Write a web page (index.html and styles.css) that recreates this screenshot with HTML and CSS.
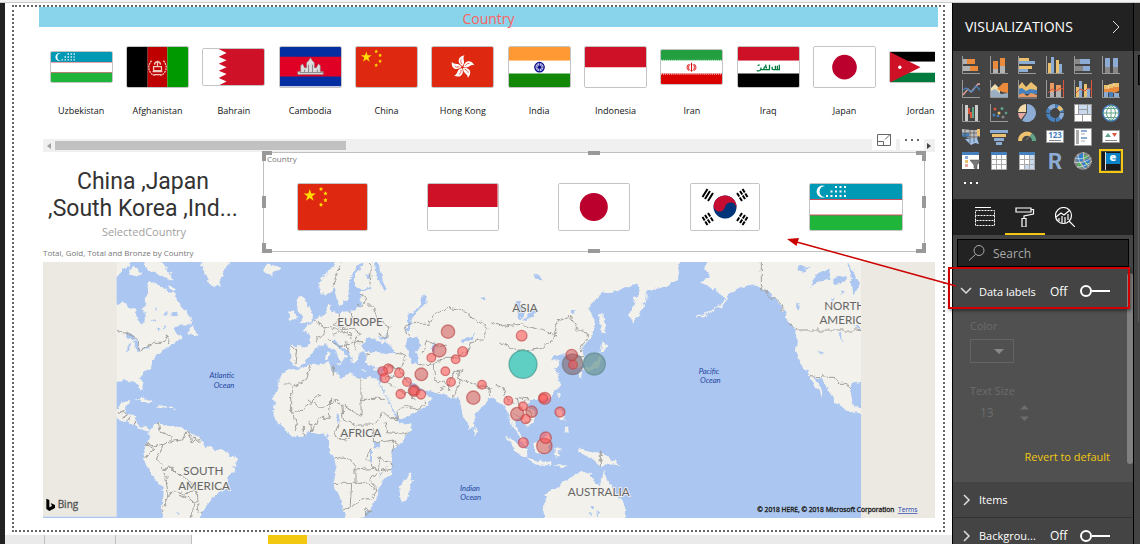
FILE: index.html
```html
<!DOCTYPE html>
<html lang="en">
<head>
<meta charset="utf-8">
<title>Report editor</title>
<link rel="stylesheet" href="styles.css">
</head>
<body>
<div class="topline"></div>
<div class="app">
  <main class="workspace">
    <div class="page">
      <h1 class="banner">Country</h1>
      <section class="strip">
        <ul class="flags">
          <li><span class="slot"><svg class="flag" viewBox="0 0 92 46"><g id="uz"><path fill="#0099b5" d="M0 0h92v15H0z"/><path fill="#fff" d="M0 15h92v16H0z"/><path fill="#1eb53a" d="M0 31h92v15H0z"/><path stroke="#c8515f" d="M0 15.500h92M0 31h92"/><path fill="#fff" d="M15 2a6 6 0 1 0 0 11a5 5 0 1 1 0-11z"/><path stroke="#fff" stroke-width="2" stroke-dasharray="2 2.500" d="M25 3h11M20.500 7.500h15M16 12h20"/></g></svg></span>Uzbekistan</li>
          <li><span class="slot"><svg class="flag" viewBox="0 0 62 41"><path d="M0 0h21v41H0z"/><path fill="#be0000" d="M21 0h20v41H21z"/><path fill="#090" d="M41 0h21v41H41z"/><g fill="none" stroke="#f4c9c0" stroke-width="1.300"><path d="M25 14c-5 5-3 13 3 15M37 14c5 5 3 13-3 15" stroke-dasharray="2 .8"/><path d="M26 25h10M27 20h8v4h-8zM31 14v6M28 18c0-4 6-4 6 0M27 28h8"/></g></svg></span>Afghanistan</li>
          <li><span class="slot"><svg class="flag" viewBox="0 0 62 37"><path fill="#fff" d="M0 0h62v37H0z"/><path fill="#ce1126" d="M62 0H16l8 4-8 4 8 3.500-8 3.500 8 3.500-8 3.500 8 3.500-8 4 8 3.500-8 4h46z"/></svg></span>Bahrain</li>
          <li><span class="slot"><svg class="flag" viewBox="0 0 62 40"><path fill="#032ea1" d="M0 0h62v40H0z"/><path fill="#e00025" d="M0 10h62v20H0z"/><path fill="#ddd" stroke="#777" stroke-width=".5" d="M18 28v-3h3v-6l2-2 2 4h2v-5l2-2 2-3 2 3 2 2v5h2l2-4 2 2v6h3v3z"/><path stroke="#888" d="M20 26h24M25 23v3M29 18v8M33 18v8M38 23v3"/></svg></span>Cambodia</li>
          <li><span class="slot"><svg class="flag" viewBox="0 0 62 41"><g id="cn"><path fill="#de2910" d="M0 0h62v41H0z"/><path fill="#ffde00" d="M10.500 4.500l1.300 4h4.200l-3.400 2.500 1.300 4-3.400-2.500-3.400 2.500 1.300-4L5 8.500h4.200z"/><path fill="#ffde00" d="M20.500 2.500l.6 1.200 1.300.2-1 .9.300 1.300-1.200-.6-1.200.6.300-1.300-1-.9 1.300-.2zM24.500 6.500l.6 1.200 1.300.2-1 .9.300 1.300-1.200-.6-1.200.6.300-1.300-1-.9 1.300-.2zM24.500 12.500l.6 1.200 1.300.2-1 .9.300 1.300-1.200-.6-1.200.6.300-1.300-1-.9 1.300-.2zM20.500 16.500l.6 1.200 1.300.2-1 .9.300 1.300-1.200-.6-1.200.6.300-1.300-1-.9 1.300-.2z"/></g></svg></span>China</li>
          <li><span class="slot"><svg class="flag" viewBox="0 0 62 41"><path fill="#de2910" d="M0 0h62v41H0z"/><g transform="translate(31 20.500)"><g id="petal"><path fill="#fff" d="M0-1C-6-4-5-11 2-12-1-8 4-6 0-1z"/><path stroke="#de2910" stroke-width=".7" fill="none" d="M-.5-3c-1-2-2-3-.8-5"/></g><use href="#petal" transform="rotate(72)"/><use href="#petal" transform="rotate(144)"/><use href="#petal" transform="rotate(216)"/><use href="#petal" transform="rotate(288)"/></g></svg></span>Hong Kong</li>
          <li><span class="slot"><svg class="flag" viewBox="0 0 62 41"><path fill="#f93" d="M0 0h62v14H0z"/><path fill="#fff" d="M0 14h62v13H0z"/><path fill="#138808" d="M0 27h62v14H0z"/><circle cx="31" cy="20.500" r="4.800" fill="#bbe" stroke="#008" stroke-width="1.200"/><path stroke="#338" stroke-width=".8" d="M31 16v9M26.500 20.500h9M28 17.500l6 6M34 17.500l-6 6"/><circle cx="31" cy="20.500" r="1.500" fill="#008"/></svg></span>India</li>
          <li><span class="slot"><svg class="flag" viewBox="0 0 62 41"><g id="id"><path fill="#fff" d="M0 0h62v41H0z"/><path fill="#ce1126" d="M0 0h62v20.500H0z"/></g></svg></span>Indonesia</li>
          <li><span class="slot"><svg class="flag" viewBox="0 0 62 35"><path fill="#239f40" d="M0 0h62v11H0z"/><path fill="#fff" d="M0 11h62v13H0z"/><path fill="#da0000" d="M0 24h62v11H0z"/><path stroke="#fff" stroke-dasharray="1 1" d="M0 10.500h62M0 24.500h62"/><path fill="none" stroke="#da0000" d="M31 13v9M29.500 14.500c-2 2-2 5 .5 6.500M32.500 14.500c2 2 2 5-.5 6.500M28 14.500c-2 2-2 5 .5 6.500M34 14.500c2 2 2 5-.5 6.500"/></svg></span>Iran</li>
          <li><span class="slot"><svg class="flag" viewBox="0 0 62 41"><path fill="#ce1126" d="M0 0h62v14H0z"/><path fill="#fff" d="M0 14h62v13H0z"/><path d="M0 27h62v14H0z"/><path fill="none" stroke="#007a3d" stroke-width="1.300" d="M19 24c3 1 5-1 4-3M23 23h9v-5M26 23c1-2 0-3 2-3M29 22l-1-4M20 19l2-1M36 23h6v-5M38 23v-4M40 23v-4M35 20c-1 2 0 3 1 3"/></svg></span>Iraq</li>
          <li><span class="slot"><svg class="flag" viewBox="0 0 62 41"><g id="jp"><path fill="#fff" d="M0 0h62v41H0z"/><circle cx="31" cy="20.500" r="12.500" fill="#bc002d"/></g></svg></span>Japan</li>
          <li><span class="slot"><svg class="flag" viewBox="0 0 62 31"><path d="M0 0h62v10H0z"/><path fill="#fff" d="M0 10h62v11H0z"/><path fill="#007a3d" d="M0 21h62v10H0z"/><path fill="#ce1126" d="M0 0l31 15.500L0 31z"/><circle cx="10" cy="15.500" r="1.700" fill="#fff"/></svg></span>Jordan</li>
        </ul>
        <div class="hscroll">
          <button class="arrow" aria-label="Scroll left"><svg width="4" height="6" viewBox="0 0 4 6"><path fill="#a0a0a0" d="M4 0v6L0 3z"/></svg></button>
          <div class="thumb"></div>
          <button class="arrow" aria-label="Scroll right"><svg width="4" height="6" viewBox="0 0 4 6"><path fill="#444" d="M0 0v6l4-3z"/></svg></button>
        </div>
        <div class="tools">
          <button aria-label="Focus mode"><svg width="14" height="13" viewBox="0 0 14 13" fill="none" stroke="#666"><path d="M.5.500h13v11H.5zM.5 7.500h6v4M8 5.500l5-5M9.500.500h4v4"/></svg></button>
          <button aria-label="More options"><svg width="14" height="13" viewBox="0 0 14 13" fill="#666"><path d="M0 5h2v2H0zM6 5h2v2H6zM12 5h2v2h-2z"/></svg></button>
        </div>
      </section>
      <div class="middle">
        <section class="left">
          <div class="value">China ,Japan<br>,South Korea ,Ind...</div>
          <div class="measure">SelectedCountry</div>
          <h2 class="caption">Total, Gold, Total and Bronze by Country</h2>
        </section>
        <section class="selected">
          <h2 class="caption">Country</h2>
          <div class="picked">
            <svg class="flag" viewBox="0 0 62 41"><use href="#cn"/></svg>
            <svg class="flag" viewBox="0 0 62 41"><use href="#id"/></svg>
            <svg class="flag" viewBox="0 0 62 41"><use href="#jp"/></svg>
            <svg class="flag" viewBox="0 0 68 46"><path fill="#fff" d="M0 0h68v46H0z"/><g transform="rotate(12 34 23)"><circle cx="34" cy="23" r="11.500" fill="#003478"/><path fill="#c60c30" d="M22.500 23a11.500 11.500 0 0 1 23 0a5.750 5.750 0 0 0-11.500 0a5.750 5.750 0 0 1-11.500 0z"/></g><g stroke="#000" stroke-width="2"><path d="M11.500 13l5-8M14 15l5-8M17 17l5-8"/><path d="M56.500 13l-5-8M54 15l-5-8M51 17l-5-8" stroke-dasharray="4.200 1"/><path d="M11.500 33l5 8M14 31l5 8M17 29l5 8" stroke-dasharray="4.200 1"/><path d="M56.500 33l-5 8M54 31l-5 8M51 29l-5 8" stroke-dasharray="4.200 1"/></g></svg>
            <svg class="flag" viewBox="0 0 92 46"><use href="#uz"/></svg>
          </div>
          <span class="handle nw"></span><span class="handle n"></span><span class="handle ne"></span><span class="handle w"></span><span class="handle e"></span><span class="handle sw"></span><span class="handle s"></span><span class="handle se"></span>
        </section>
      </div>
      <svg class="map" viewBox="129 21 2676 768" role="img" aria-label="Map of medals by country">
        <defs><filter id="coast" x="0" y="0" width="100%" height="100%"><feTurbulence type="fractalNoise" baseFrequency=".05" numOctaves="3" seed="4"/><feDisplacementMap in="SourceGraphic" scale="20" xChannelSelector="R" yChannelSelector="G"/></filter></defs>
        <path class="sea" d="M129 21h2676v768H129z"/>
        <g filter="url(#coast)">
          <path fill="none" d="M100-20h2750v850H100z"/>
          <g>
            <path class="land" d="M330 138L380 148 405 165 413 195 425 207 436 192 437 175 428 162 442 150 430 135 447 115 445 85 470 80 485 95 500 100 505 120 520 112 535 130 538 150 552 165 575 185 580 195 565 208 540 210 520 225 535 238 545 250 525 265 505 275 490 285 470 300 455 315 455 335 430 360 420 372 432 400 425 412 412 392 408 380 385 378 330 382zM565 218l12-12 6 18 15 18-33-5zM330 10h65l-10 25-20 15-35 30zM385 40l20-7 17 27-17 6-15-11zM428 10h50l22 30 20 32-30 2-22-22-25-7zM505 90l20 10-10 10zM598 10h100l-25 35-18 45-15 8-20-28-12-35zM788 42l12-17 35 5 7 10-27 20-20-10zM403 430l27-2 32 15-20 2zM468 456l12-8 22 7-5 6zM510 458l10 0 0 4-10 0z"/>
            <path class="land" d="M330 465L358 458 360 445 387 438 385 450 372 460 385 478 408 480 410 505 425 518 440 513 452 522 475 500 490 510 520 510 550 515 570 535 600 545 612 575 640 580 690 595 708 612 705 635 685 665 680 700 645 720 625 745 605 770 600 810 484 810 488 700 465 675 440 635 425 605 435 575 445 555 445 528 435 530 415 522 385 500 330 485z"/>
            <path class="sea" d="M383 262l12 0-5 28-8 0zM400 258l13 6 7 21-14 3zM378 235l22 5 12 15-32-5zM422 284l25-12 5 3-22 10zM455 190l12 2-4 9zM470 218l12 3-8 8zM490 180l6-10 6 12zM515 172l20-2 0 12-20 2zM490 215l8 2-3 8zM465 155l6 10-4 4zM525 770l18 2-8 5z"/>
            <path class="border" d="M340 228L380 235 410 250 418 288 440 275 462 262 490 262 500 240 508 248 512 265M352 475l20-10 10 15-15 10M385 500l10-20M400 510l8-10M475 500l5 30 30 10 0 20-15 8-30 10-25-15M510 560l35-5 10-20 15 0 5 25 30-3M585 555l-10-15M425 605l25-5 15-15-28-20M490 570l-10 20-10 20 20 30 30 0 20 20 35 20 5 30-35 10-25-8-15 10-5-35-5-40M505 715l-20 60M540 710l45 35-15 44M585 745l10-10-10-25M597 745l-5 20 15 12"/>
          </g>
          <g transform="translate(870)">
            <path class="land" d="M25 125l15-3 10 22 17 36-7 20-32 8 12-18-12-20-8-20zM-2 170l17-7 5 27-24 8zM140 5L125 45 100 65 88 85 90 115 105 122 120 110 135 95 140 120 148 150 160 150 172 130 180 95 178 75 190 55 205 30 222 25 195 60 195 90 215 105 245 95 240 105 215 112 210 135 215 150 180 170 150 175 128 168 120 150 110 150 110 175 90 182 75 195 45 215 40 225 60 240 62 265 55 275 5 272 0 310 8 330 28 335 50 315 70 285 90 275 105 265 130 285 150 310 155 325 162 310 175 305 150 285 125 260 135 252 160 280 180 295 185 315 195 328 205 310 200 300 225 290 230 300 222 320 245 335 290 335 280 355 272 380 290 430 325 490 335 493 400 460 425 430 405 415 370 400 352 375 365 385 400 405 440 412 490 425 510 430 515 470 540 522 552 515 555 480 600 430 620 425 640 440 655 480 668 510 672 5z"/>
            <path class="land" d="M-10 342L20 345 60 328 120 322 128 350 160 365 175 355 210 368 255 370 268 378 275 400 305 465 325 500 330 507 368 502 360 525 325 570 305 590 300 610 305 660 275 680 260 720 250 750 215 785 200 810 172 800 155 740 130 685 140 640 130 605 115 590 118 560 110 540 85 535 65 530 40 540 10 548-20 520-48 490-50 470-45 440-48 430-35 390-25 360zM362 655l8 15-20 65-18 2-4-37 17-25zM552 515l10 15-4 12-8-12zM110 290l8 0 0 22-8 0zM135 322l20 5-5 8zM208 345l22 2-10 4zM250 340l16-4-5 8z"/>
            <path class="sea" d="M226 290L212 270 235 250 255 258 290 262 315 290 290 298 260 292zM265 245l27-8-10 16-17 0zM355 250l30-5 5 30-15 15 10 35-20 2-10-32-10-25zM428 262l10 4-5 25-8-5zM512 252l25-6 20-8-10 15-30 8zM265 21l10 50 15 30-5 15-25-55-5-40zM225 60l18-5-5 20zM350 225l5-45 30-20 20-45 5 30-20 15-20 25-10 45zM135 480l12 5-2 20zM250 560l20 0 0 20-20 0zM240 585l6 0 0 40-6 0zM272 650l6 2-6 26zM570 130l12-6 0 10z"/>
            <path class="border" d="M132 95L138 60 160 21M245 21l-5 70M210 120l20 8-15 25-20-5M230 150l20 0 15 45 35 20-10 30-25-8M180 170l8 30-25 20-30-10 15-20 0-15M75 195l30 20-5 30-15 0-10 15M105 215l45 10 40-5 20 15-15 25 5 25M130 240l20-10 30 10 10 25-40 10-30-20M170 260l5 35M195 260l25 0M5 280l15 0-5 45M230 300l15-5M318 290l30 15-10 30-45 5M290 335l35 0 20 40M330 335l5 20 15 25M345 215l30-10 40 0 15-25 45-20 55 10 60 50-10 30-40 15-10 30M345 215l15 35M400 290l10-35 35 20 20-5M385 325l45 5 30-20 40 0 20-15M430 330l5 45 40 15 15-35 30-15M440 410l35-20 5 15M490 355l15-10 5 35-20 45M505 370l50 20 40 5 5 25M560 395l35 5M600 220l30 40 40-10M590 400l45-5M285 370l30-10M290 380l35 25 30 10 25 20M325 465l30-10 30 10 20-25M320 470l5 20"/>
            <path class="border" d="M60 328l-10 45-40 20M130 325l0 40M213 368l0 115-10-5-65-40-50 20-40-30M213 433l75 0M-20 390l25 0 0 85 25-5 60-50M125 430l-5 60-35 0-20 40M155 450l5 45 40 15 50 0 30-40M150 500l-15 40 30 20 35-45M10 480l10 50M40 510l0 30M60 500l5 30M280 470l20 20 25 0M285 500l5 30 60 5M250 520l0 40 30 0 30-5 15 15M310 590l0-35M240 580l-10 30 20 30 15 5 5-40 40 30M135 610l45 5 15 20 0 50-65 0M195 645l60-5 15 20 5-15 30-5M185 690l-5 70-25 0M195 685l35 0 30 20-15 25-35 5-25 20M260 700l-20-20 15-25M225 760l10 0 5 12-12 8z"/>
          </g>
          <g transform="translate(1500)">
            <path class="land" d="M-40 5L550 5 530 40 535 75 480 100 442 105 438 140 415 190 400 205 390 180 400 140 415 115 420 85 390 90 350 110 310 110 270 150 265 165 283 190 285 225 262 260 245 280 250 325 238 340 225 340 220 310 198 298 165 300 160 315 178 320 165 340 180 370 175 400 150 425 110 435 90 435 85 450 108 480 100 510 80 515 60 490 45 500 55 530 75 555 85 572 60 555 42 520 35 480 20 470 10 450-20 430zM290 178l20 0 8 55-12 8-6-40zM305 262l22 10-17 13-12 6zM307 295l-9 37-28 17-28-4 38-20zM236 350l14 3-5 18-8-5zM175 412l8 6-8 17zM168 460l17 5 5 25 10 10-15-8-14-14zM192 510l16 5-3 20-13-10zM16 540l29 15 36 30 1 22-17-1-30-35zM80 610l72 14-2 8-60-10zM103 567l45-32 8 25-16 35-32-3zM162 583l28-5-14 12 5 17-13 0zM160 628l45 0-20 8zM233 578l37 10 60 17 28 32-38-12-18 8-27-23-26-14zM128 810L135 720 180 690 215 665 240 648 277 655 270 670 300 690 312 643 322 680 350 715 375 750 375 810z"/>
            <path class="sea" d="M100 55l20 8 6 10-20-2zM68 195l35-30 10 8-35 25zM50 135l12 0 10 40-8 20-15-20zM210 165l20 0-10 12zM155 305l20-5 4 8-20 8zM275 750l10 0-8 20zM265 778l8 0-2 8zM290 770l4 0 0 12-4 0z"/>
            <path class="border" d="M-30 200l50 15 50-5 70 20 30 15-20 15-20 20-60 8-40-8-30-20M170 245l-10-15 20-40 30-5 30 45 22 5 0 15-25 35M-10 390l30 15-10 20 20 20 20 0M50 430l35 5M50 430l10 25 30 15 5 20-20 15M40 470l15 20M218 310l30-10M301 590l0 44"/>
          </g>
          <g transform="translate(2160)">
            <path class="land" d="M-30 5L-50 45-28 52-33 68-58 80-30 95 0 118 20 127 45 105 70 92 95 90 120 95 150 115 170 140 190 165 210 205 232 230 228 290 245 330 268 360 285 395 313 427 302 395 285 365 300 370 320 395 340 425 345 445 375 465 405 472 440 480 440 458 405 460 392 435 390 405 400 385 440 378 440 5z"/>
            <path fill="none" stroke="#f2f1ec" stroke-width="5" d="M25 125l-20 25-40 25-40 10"/>
            <path class="sea" d="M230 30l35 5-10 15-20-5zM300 50l30-8-5 30-35 10-20 15 10-25zM340 70l40-10-10 25-30 5zM385 21l15 30 20 40-20 30-5-40zM225 145l15 5-5 20zM355 235l12 3 10 25-8-8zM295 290l10-2 3 12zM400 210l20 5 0 10zM330 130l15 5-10 8zM360 120l8-15 6 10z"/>
            <path class="border" d="M124 15l0 90 12 0 10 20 30 15 15 25M205 205l30 20 175 0M410 225l20 5M270 362l50 5 25 0 15 18 15 0 15 20"/>
          </g>
        </g>
        <path class="void" d="M129 21h221v764H129zM2583 21h222v768h-222z"/>
        <g class="continent">
          <text x="1080" y="213">EUROPE</text><text x="1575" y="170">ASIA</text><text x="1082" y="545">AFRICA</text><text x="1796" y="723">AUSTRALIA</text><text x="610" y="661">SOUTH</text><text x="612" y="704">AMERICA</text>
        </g>
        <svg x="2400" y="100" width="183" height="140" viewBox="2400 100 183 140"><g class="continent"><text x="2534" y="165">NORTH</text><text x="2536" y="208">AMERICA</text></g></svg>
        <g class="ocean"><text x="666" y="370">Atlantic</text><text x="672" y="398">Ocean</text><text x="1410" y="707">Indian</text><text x="1412" y="735">Ocean</text><text x="2127" y="357">Pacific</text><text x="2131" y="385">Ocean</text></g>
        <g class="bubbles" transform="translate(870)">
          <g class="mid"><circle cx="474" cy="230" r="20"/><circle cx="448" cy="286" r="20"/><circle cx="394" cy="358" r="19"/><circle cx="550" cy="428" r="20"/><circle cx="372" cy="407" r="17"/></g>
          <circle cx="518" cy="290" r="15"/><circle cx="424" cy="308" r="13"/><circle cx="497" cy="313" r="13"/><circle cx="466" cy="349" r="13"/><circle cx="328" cy="354" r="14"/><circle cx="295" cy="341" r="14"/><circle cx="278" cy="349" r="14"/><circle cx="284" cy="369" r="14"/><circle cx="351" cy="381" r="13"/><circle cx="372" cy="407" r="13"/><circle cx="393" cy="418" r="14"/><circle cx="332" cy="417" r="14"/><circle cx="483" cy="381" r="13"/><circle cx="576" cy="389" r="13"/>
        </g>
        <g class="bubbles" transform="translate(1500)">
          <circle class="teal" cx="69" cy="328" r="42"/><circle class="gray" cx="218" cy="328" r="31"/><circle class="green" cx="283" cy="327" r="33"/>
          <g class="mid"><circle cx="215" cy="300" r="17"/><circle cx="52" cy="477" r="20"/><circle cx="133" cy="573" r="23"/><circle cx="95" cy="470" r="17"/></g>
          <circle cx="65" cy="242" r="16"/><circle cx="219" cy="329" r="13"/><circle cx="25" cy="437" r="13"/><circle cx="134" cy="430" r="18"/><circle cx="130" cy="430" r="13"/><circle cx="69" cy="454" r="13"/><circle cx="77" cy="492" r="14"/><circle cx="180" cy="471" r="15"/><circle cx="70" cy="563" r="15"/><circle cx="137" cy="548" r="17"/>
        </g>
        <path d="M139 731l9 4v22l8-4-4-9 13 6v9l-17 9-9-6z"/>
        <text class="bing" x="173" y="760">Bing</text>
        <text class="credit" x="2272" y="772">© 2018 HERE, © 2018 Microsoft Corporation</text>
        <a href="#terms"><text class="credit terms" x="2694" y="772">Terms</text></a>
      </svg>
    </div>
    <nav class="sheets"><button class="s1" aria-label="Scroll pages"></button><button class="s2" aria-label="Page 1"></button><button class="s3" aria-label="Page 2"></button><button class="s4" aria-label="Page 3"></button><button class="s5" aria-label="New page"></button></nav>
  </main>
  <aside class="panel">
    <header class="head"><h2>VISUALIZATIONS</h2><button aria-label="Collapse pane"><svg width="8" height="14" viewBox="0 0 8 14" fill="none" stroke="#ddd"><path d="M1 1l6 6-6 6"/></svg></button></header>
    <div class="gallery">
      <button aria-label="Stacked bar chart"><svg viewBox="0 0 18 18"><path fill="#b3b3b3" d="M1 3h4v5H1zM1 10h7v5H1z"/><path fill="#e98a3c" d="M5 3h8v5H5zM8 10h8v5H8z"/><path class="axis" d="M.5 0v17.500H18"/></svg></button>
      <button aria-label="Stacked column chart"><svg viewBox="0 0 18 18"><path fill="#b3b3b3" d="M3 13h5v4H3zM10 10h5v7h-5z"/><path fill="#e98a3c" d="M3 5h5v8H3zM10 2h5v8h-5z"/><path class="axis" d="M.5 0v17.500H18"/></svg></button>
      <button aria-label="Clustered bar chart"><svg viewBox="0 0 18 18"><path fill="#ebc06f" d="M1 2h10v3H1zM1 10h13v3H1z"/><path fill="#8cacd3" d="M1 5h16v3H1zM1 13h9v3H1z"/><path class="axis" d="M.5 0v17.500H18"/></svg></button>
      <button aria-label="Clustered column chart"><svg viewBox="0 0 18 18"><path fill="#ebc06f" d="M2 7h3v10H2zM10 4h3v13h-3z"/><path fill="#8cacd3" d="M5 1h3v16H5zM13 8h3v9h-3z"/><path class="axis" d="M.5 0v17.500H18"/></svg></button>
      <button aria-label="100% stacked bar chart"><svg viewBox="0 0 18 18"><path fill="#888" d="M1 3h5v5H1zM1 10h8v5H1z"/><path fill="#8cacd3" d="M6 3h10v5H6zM9 10h7v5H9z"/><path class="axis" d="M.5 0v17.500H18"/></svg></button>
      <button aria-label="100% stacked column chart"><svg viewBox="0 0 18 18"><path fill="#888" d="M3 11h5v6H3zM11 11h5v6h-5z"/><path fill="#8cacd3" d="M3 2h5v9H3zM11 2h5v9h-5z"/><path class="axis" d="M.5 0v17.500H18"/></svg></button>
      <button aria-label="Line chart"><svg viewBox="0 0 18 18"><path class="axis" d="M.5 0v17.500H18"/><path fill="none" stroke="#e5a7a2" stroke-width="1.300" d="M1 15l5-6 3 3 7-8 2 0"/><path fill="none" stroke="#4680bd" stroke-width="1.300" d="M1 10l3-2 4 3 3 0 3-5 4 4"/></svg></button>
      <button aria-label="Area chart"><svg viewBox="0 0 18 18"><path fill="#f0dfb2" d="M1 8l4-4 5 5v8H1z"/><path fill="#e98a3c" d="M7 9l6-6 5 0v10l-6-1z"/><path fill="#9ab0c2" d="M1 11l4-2 6 5 7-1v4H1z"/><path class="axis" d="M.5 0v17.500H18"/></svg></button>
      <button aria-label="Stacked area chart"><svg viewBox="0 0 18 18"><path fill="#ebc06f" d="M0 7l4-5 4 5 5-5 6 5v6H0z"/><path fill="#4680bd" d="M0 9l4-1 4 3 4-2 7 1v4H0z"/><path fill="#e99a62" d="M0 15l5-2 4 3 4-3 6 2v2H1z"/><path class="axis" d="M.5 0v18H19"/></svg></button>
      <button aria-label="Line and stacked column chart"><svg viewBox="0 0 18 18"><path fill="#e99a62" d="M4 3h4v9H4zM10 5h5v6h-5z"/><path fill="#b3b3b3" d="M4 12h4v5H4zM10 11h5v6h-5z"/><path fill="none" stroke="#d8563e" d="M2 13l4-4 5 2 3-3 3 1M17.500 0v17"/><path class="axis" d="M.5 0v17.500H18"/></svg></button>
      <button aria-label="Line and clustered column chart"><svg viewBox="0 0 18 18"><path fill="#ebc06f" d="M2 7h3v10H2zM10 4h3v13h-3z"/><path fill="#8cacd3" d="M5 1h3v16H5zM13 8h3v9h-3z"/><path fill="none" stroke="#d8563e" d="M2 13l4-4 5 2 3-3 3 1M17.500 0v17"/><path class="axis" d="M.5 0v17.500H18"/></svg></button>
      <button aria-label="Ribbon chart"><svg viewBox="0 0 18 18"><path fill="#f3dca9" d="M2 6l4-1 6-2 5 0v6l-15 3z"/><path fill="#e98a3c" d="M2 9h4l6-3h5v5l-5 2-10-1z"/><path fill="#ebc06f" d="M2 5h4v4H2zM7 4h4v4H7zM12 3h5v4h-5z"/><path fill="#8cacd3" d="M2 12h4v5H2zM12 13h5v4h-5z"/><path fill="#4680bd" d="M7 12h4v5H7z"/><path class="axis" d="M.5 0v17.500H18"/></svg></button>
      <button aria-label="Waterfall chart"><svg viewBox="0 0 18 18"><path class="axis" d="M.5 0v17.500H18"/><path fill="#ccc" d="M3 1h3v16H3zM13 1h3v16h-3z"/><path fill="#d8563e" d="M6 4h2v6H6zM8 8h2v6H8z"/><path fill="#60a388" d="M10 3h2v11h-2z"/></svg></button>
      <button aria-label="Scatter chart"><svg viewBox="0 0 18 18"><path class="axis" d="M.5 0v17.500H18"/><circle cx="5" cy="5" r="1.500" fill="#d8563e"/><g fill="#60a388"><circle cx="12" cy="4.500" r="1.500"/><circle cx="16" cy="9" r="1.300"/></g><g fill="#4680bd"><circle cx="4" cy="11" r="1.500"/><circle cx="8" cy="12" r="1.300"/></g><circle cx="9" cy="9" r="1.500" fill="#ebc06f"/><circle cx="13" cy="13" r="1.500" fill="#888"/></svg></button>
      <button aria-label="Pie chart"><svg viewBox="0 0 18 18"><path fill="#8cacd3" d="M9 9V0a9 9 0 1 1-5 16.500z"/><path fill="#f3dca9" d="M8 8V0a8.500 8.500 0 0 0-8 8z"/><path fill="#e5a7a2" d="M8 9H0a9 9 0 0 0 3 6.500z"/></svg></button>
      <button aria-label="Donut chart"><svg viewBox="0 0 18 18" fill="none" stroke-width="4"><circle cx="9" cy="9" r="7" stroke="#4680bd" stroke-dasharray="10 1"/><path stroke="#8cacd3" d="M9 2a7 7 0 0 0-5.500 3M16 9a7 7 0 0 1-2 5"/><path stroke="#ebc06f" d="M12 3a7 7 0 0 1 3.500 3.500"/></svg></button>
      <button aria-label="Treemap"><svg viewBox="0 0 18 18"><path fill="#999" d="M0 0h18v18H0z"/><path fill="#fff" d="M1 1h3v9H1zM1 11h7v6H1zM9 11h8v6H9z"/><path fill="#c8d9ee" d="M5 1h8v4H5zM5 6h8v4H5zM14 1h3v9h-3z"/></svg></button>
      <button aria-label="Map"><svg viewBox="0 0 18 18"><circle cx="9" cy="9" r="8" fill="#fff" stroke="#4680bd" stroke-width="1.500"/><path fill="none" stroke="#60a388" d="M9 1v16M1 9h16M3 4.500h12M3 13.500h12M9 1c-6 5-6 11 0 16M9 1c6 5 6 11 0 16"/></svg></button>
      <button aria-label="Filled map"><svg viewBox="0 0 18 18"><path fill="#bbb" d="M0 1l9 1 7 0 2-1-1 6-3 5-8-2-6-3z"/><path fill="#4680bd" d="M0 5h7v4H1z"/><path fill="#9fc0e6" d="M3 11l12-1 2 6-4-1-4 2z"/><path fill="#ebc06f" d="M15 1h3v8l-3-2z"/><path stroke="#555" fill="none" stroke-width=".7" d="M3 1v8M0 5h15M8 2v13M12 2v12M3 9h14"/></svg></button>
      <button aria-label="Funnel"><svg viewBox="0 0 18 18"><path fill="#8cacd3" d="M0 2h18v3H0zM4 10h10v3H4zM6 14h6v3H6z"/><path fill="#ebc06f" d="M2 6h14v3H2z"/></svg></button>
      <button aria-label="Gauge"><svg viewBox="0 0 18 18" fill="none" stroke-width="4"><path stroke="#ebc06f" d="M2 13a7 7 0 0 1 11-6"/><path stroke="#60a388" d="M13 7a7 7 0 0 1 3 6"/><path stroke="#666" stroke-width="1.500" d="M8 12l3-3"/></svg></button>
      <button aria-label="Card"><svg viewBox="0 0 18 18"><path fill="#fff" stroke="#999" d="M.5 2.500h17v12H.5z"/><path stroke="#888" d="M3 12.500h12"/><text x="9" y="10" text-anchor="middle" class="glyph">123</text></svg></button>
      <button aria-label="Multi-row card"><svg viewBox="0 0 18 18"><path fill="#fff" stroke="#999" d="M.5.500h17v17H.5z"/><path fill="#aaa" d="M2 2h3v14H2z"/><path stroke="#8cacd3" stroke-width="2" d="M7 3h6M7 10h6"/><path stroke="#aaa" d="M7 6h4M7 13h4"/></svg></button>
      <button aria-label="KPI"><svg viewBox="0 0 18 18"><path fill="#fff" stroke="#999" d="M.5 2.500h17v12H.5z"/><path fill="#60a388" d="M3 9l3-4 3 4z"/><path fill="#d8563e" d="M10 5h5l-2.500 4z"/><path stroke="#888" d="M3 12.500h12"/></svg></button>
      <button aria-label="Slicer"><svg viewBox="0 0 18 18"><path fill="#fff" d="M0 0h17v17H0z"/><path fill="#4680bd" d="M0 0h17v3H0z"/><path fill="#8cacd3" d="M3 4h3v3H3z"/><path fill="#ebc06f" d="M3 8h3v3H3z"/><path fill="#e5a7a2" d="M3 12h3v3H3z"/><path fill="#777" stroke="#444" stroke-width=".5" d="M8 8h11l-4 5v5l-3-2v-3z"/></svg></button>
      <button aria-label="Table"><svg viewBox="0 0 18 18"><path fill="#fff" stroke="#aaa" d="M1.500 1.500h15v16h-15zM6.500 3v14M11.500 3v14M2 7.500h14M2 12.500h14"/><path fill="#4680bd" d="M1 0h16v3H1z"/></svg></button>
      <button aria-label="Matrix"><svg viewBox="0 0 18 18"><path fill="#fff" d="M1 1h16v17H1z"/><path fill="#c8d9ee" d="M12 3h5v15h-5zM6 13h11v5H6z"/><path fill="none" stroke="#aaa" d="M1.500 1.500h15v16h-15zM6.500 3v14M11.500 3v14M2 7.500h14M2 12.500h14"/><path fill="#4680bd" d="M1 0h16v3H1z"/></svg></button>
      <button aria-label="R script visual"><svg viewBox="0 0 18 18"><text class="rglyph" x="9" y="17" text-anchor="middle">R</text></svg></button>
      <button aria-label="ArcGIS map"><svg viewBox="0 0 18 18"><circle cx="9" cy="9" r="9" fill="#888"/><path fill="#2f7fd0" d="M2 6l6-5 3 2-3 6-4 1zM8 10l7-4 1 5-6 6z"/><path fill="#4fae5a" d="M9 2l6 3-5 3zM3 11l4-1 1 6-4-2zM10 10l5 1-2 3z"/><path fill="none" stroke="#ddd" stroke-width=".8" d="M1 6c5 2 11 0 14-3M0 10c6 2 14-1 17-4M3 15c6 0 12-3 15-6M4 2c0 6 3 12 8 15M10 0c-2 6 1 12 5 14"/></svg></button>
      <button class="chosen" aria-label="Image grid"><svg viewBox="0 0 18 18"><path fill="#1a1a1a" d="M0 0h18v18H0z"/><path stroke="#ddd" d="M3.500 0v18"/><path fill="#0a84c6" d="M4 1h14v11H4z"/><text class="eglyph" x="11" y="9" text-anchor="middle">e</text></svg></button>
      <button class="more" aria-label="Import a custom visual"><svg viewBox="0 0 18 18" fill="#fff"><path d="M2 6h2v2H2zM8 6h2v2H8zM14 6h2v2h-2z"/></svg></button>
    </div>
    <nav class="tabs">
      <button aria-label="Fields"><svg viewBox="0 0 20 20" fill="none" stroke="#fff"><path d="M0 .500h16"/><path stroke-dasharray="2 1" d="M.5 3.500h19v5H.5zM.5 8.500v5h19v-5M.5 13.500v5h19v-5"/></svg></button>
      <button class="on" aria-label="Format"><svg viewBox="0 0 20 20" fill="none" stroke="#fff" stroke-width="1.200"><path d="M1 1h15v4H1zM16 2.500h2.500V7L9 9v3M7 11.500h4V20H7z"/></svg></button>
      <button aria-label="Analytics"><svg viewBox="0 0 20 20" fill="none" stroke="#fff" stroke-width="1.200"><circle cx="8.500" cy="8.500" r="8"/><path d="M14 14l6 6M1 10l5-4 3 2 6-5M4 11v3M7 9v7M10 10v6M13 7v6"/></svg></button>
    </nav>
    <label class="search"><svg width="16" height="16" viewBox="0 0 16 16" fill="none" stroke="#aaa"><circle cx="10" cy="5.500" r="5"/><path d="M6.500 9.500L0 15.500"/></svg><input type="text" placeholder="Search" aria-label="Search"></label>
    <div class="options">
      <div class="row first">
        <button class="chev" aria-label="Collapse data labels"><svg width="12" height="12" viewBox="0 0 12 12"><path d="M1 3l5 5 5-5"/></svg></button>
        <label class="name" for="dl">Data labels</label><span class="state">Off</span><input class="toggle" type="checkbox" id="dl">
        <span class="mark"></span>
        <svg class="pointer" width="170" height="52" viewBox="0 0 170 52"><path fill="none" stroke="#c00" stroke-width="1.500" d="M6 2l163 45"/><path fill="#c00" d="M0 0l12-1-2.500 8z"/></svg>
      </div>
      <div class="detail">
        <label for="color">Color</label>
        <div class="pick"><select id="color" disabled><option></option></select></div>
        <label for="size">Text Size</label>
        <div class="spin"><input id="size" type="text" value="13" disabled><svg width="9" height="16" viewBox="0 0 9 16" fill="#6c6c6c"><path d="M0 4.500L4.500 0 9 4.500zM0 11.500L4.500 16 9 11.500z"/></svg></div>
        <button class="revert">Revert to default</button>
      </div>
      <div class="row"><button class="chev" aria-label="Expand items"><svg width="12" height="12" viewBox="0 0 12 12"><path d="M4 1l5 5-5 5"/></svg></button><span class="name">Items</span></div>
      <div class="row"><button class="chev" aria-label="Expand background"><svg width="12" height="12" viewBox="0 0 12 12"><path d="M4 1l5 5-5 5"/></svg></button><label class="name" for="bg">Backgrou...</label><span class="state">Off</span><input class="toggle" type="checkbox" id="bg"></div>
      <span class="vthumb"></span>
    </div>
  </aside>
  <aside class="fields"><div class="fhead"></div><div class="fsearch"></div><div class="flist"></div></aside>
</div>
</body>
</html>
```
FILE: styles.css
```css
*, *::before, *::after { box-sizing: border-box; }
body {
  margin: 0;
  height: 100vh;
  overflow: hidden;
  display: flex;
  flex-direction: column;
  background: #fff;
  font-family: "Open Sans", "Noto Sans", sans-serif;
}
h1, h2, ul { margin: 0; padding: 0; font-weight: 400; list-style: none; }
button { border: 0; padding: 0; background: none; font: inherit; color: inherit; cursor: pointer; }
svg { display: block; }
.topline { flex: none; height: 3px; background: #f3f3f3; border-bottom: 1px solid #ccc; }
.app { flex: 1; min-height: 0; display: flex; }

/* Report canvas */
.workspace {
  flex: 1;
  min-width: 0;
  display: flex;
  flex-direction: column;
  border-left: 5px solid #222;
}
.page { flex: none; margin: 2px 7px 3px; padding-bottom: 12px; border: 2px dotted #666; }
.banner {
  margin: 0 5px 0 25px;
  background: #8ad4eb;
  color: #fd625e;
  text-align: center;
  font-size: 14px;
  line-height: 20px;
  height: 20px;
  padding-top: 2px;
}
.strip { position: relative; margin: 0 8px 0 29px; padding-top: 18px; overflow: hidden; }
.flags {
  display: grid;
  grid-template-columns: repeat(12, 1fr);
  width: calc(100% + 24px);
  padding-bottom: 22px;
}
.flags li {
  display: flex;
  flex-direction: column;
  align-items: center;
  font-size: 9px;
  line-height: 12px;
  color: #111;
}
.slot { display: flex; align-items: center; height: 44px; margin-bottom: 16px; }
.flag { border: 1px solid #c4c4c4; border-radius: 2px; }
.slot .flag { width: 63px; height: auto; }
.hscroll {
  display: flex;
  align-items: center;
  height: 13px;
  background: #f0f0f0;
}
.arrow { display: flex; justify-content: center; width: 12px; }
.thumb { width: calc(33% - 3px); height: 9px; background: #c1c1c1; margin-right: auto; }
.tools { position: absolute; right: 11px; bottom: 2px; display: flex; gap: 4px; }
.tools button { width: 24px; height: 20px; background: #fff; display: flex; align-items: center; justify-content: center; }

.middle { display: grid; grid-template-columns: 220px 1fr; margin: 0 18px 0 29px; }
.left { display: flex; flex-direction: column; padding-top: 16px; }
.value {
  font-family: Roboto, sans-serif;
  font-size: 23px;
  line-height: 27px;
  color: #333;
  text-align: center;
  white-space: nowrap;
  padding-right: 20px;
}
.measure { margin: 3px 18px 8px 0; text-align: center; font-size: 11px; line-height: 14px; color: #a0a0a0; }
.caption { font-size: 8px; line-height: 11px; color: #777; white-space: nowrap; }
.selected { position: relative; align-self: start; border: 1px solid #c0c0c0; padding: 0 3px 20px; }
.picked { display: grid; grid-template-columns: repeat(5, 1fr); justify-items: center; padding-top: 19px; }
.picked .flag { height: 48px; width: auto; }
.handle { position: absolute; width: 10px; height: 10px; border: 0 solid #999; }
.nw { top: -2px; left: -2px; border-width: 4px 0 0 4px; }
.ne { top: -2px; right: -2px; border-width: 4px 4px 0 0; }
.sw { bottom: -2px; left: -2px; border-width: 0 0 4px 4px; }
.se { bottom: -2px; right: -2px; border-width: 0 4px 4px 0; }
.n, .s { left: calc(50% - 6px); width: 12px; height: 4px; background: #999; }
.w, .e { top: calc(50% - 6px); width: 4px; height: 12px; background: #999; }
.n { top: -2px; }
.s { bottom: -2px; }
.w { left: -2px; }
.e { right: -2px; }

/* Map */
.map { width: calc(100% - 37px); height: auto; margin: 4px 8px 0 29px; }
.sea { fill: #abc7f1; }
.land { fill: #f2f1ec; }
.void { fill: #ebe9e2; }
.border { fill: none; stroke: #a09f9c; stroke-width: 3px; }
.continent { font-family: Lato, sans-serif; font-size: 35px; fill: #666; text-anchor: middle; stroke: #f2f1ec; stroke-width: 5px; paint-order: stroke; }
.ocean { font-family: Lato, sans-serif; font-size: 23px; font-style: italic; fill: #1f459f; text-anchor: middle; }
.bubbles circle { fill: #ff4d4d; fill-opacity: .55; stroke: #b94343; stroke-opacity: .6; stroke-width: 4px; }
.bubbles .mid circle { fill: #d05555; }
.bubbles .teal { fill: #1fc0b0; fill-opacity: .7; stroke: #3a8f88; }
.bubbles .gray { fill: #85747f; fill-opacity: .7; stroke: #6f6f78; }
.bubbles .green { fill: #6f9a98; fill-opacity: .75; stroke: #5f8788; }
.bing { font-size: 30px; fill: #555; stroke: #555; }
.credit { font-size: 20px; fill: #222; stroke: #222; }
.terms { fill: #1a3fb0; stroke: none; text-decoration: underline; }

/* Page tabs */
.sheets { flex: 1; min-height: 9px; display: flex; background: #eaeaea; }
.sheets button { border-right: 1px solid #c0c0c0; }
.sheets .s1 { width: 40px; }
.sheets .s2 { width: 71px; }
.sheets .s3 { width: 76px; }
.sheets .s4 { width: 76px; background: #fff; border: 0; }
.sheets .s5 { width: 39px; background: #f2c811; border: 0; }

/* Visualizations pane */
.panel {
  position: relative;
  flex: none;
  width: 182px;
  background: #444;
  border: solid #000;
  border-width: 0 1px;
  color: #fff;
}
.head {
  display: flex;
  align-items: center;
  justify-content: space-between;
  height: 48px;
  padding: 0 13px 0 12px;
  background: #222;
}
.head h2 { font-size: 14px; line-height: 20px; font-weight: 500; }
.gallery { display: grid; grid-template-columns: repeat(6, 18px); gap: 6px 10px; padding: 5px 9px; height: 148px; align-content: start; }
.gallery svg { width: 18px; height: 18px; overflow: visible; }
.gallery .chosen { outline: 2px solid #f2c811; outline-offset: 1px; }
.axis { fill: none; stroke: #999; }
.glyph { font-size: 8px; font-weight: 700; fill: #4680bd; }
.rglyph { font: 700 22px Roboto, sans-serif; fill: #8cacd3; }
.eglyph { font-size: 11px; font-weight: 800; fill: #fff; }
.tabs { display: flex; height: 36px; padding-left: 12px; background: #222; }
.tabs button { width: 40px; display: flex; align-items: center; justify-content: center; border: solid transparent; border-width: 2px 0; }
.tabs .on { border-bottom-color: #f2c811; }
.tabs svg { width: 20px; height: 20px; }
.search {
  display: flex;
  align-items: center;
  gap: 8px;
  height: 28px;
  margin: 4px 4px 0;
  padding-left: 11px;
  background: #222;
  border: 1px solid #000;
}
.search svg { flex: none; }
.search input { width: 100%; min-width: 0; border: 0; padding: 0; background: none; color: #fff; font: 12px "Open Sans", sans-serif; }
.search input::placeholder { color: #a8a8a8; }
.options { position: relative; }
.row {
  position: relative;
  display: flex;
  align-items: center;
  height: 36px;
  padding-left: 7px;
  border-bottom: 1px solid #333;
  font-size: 11px;
}
.row.first { height: 42px; padding-top: 6px; border: 0; }
.chev { width: 19px; }
.chev path { fill: none; stroke: #ddd; stroke-width: 1.5; }
.name { width: 71px; white-space: nowrap; }
.state { width: 30px; font-size: 12px; }
.toggle { appearance: none; position: relative; margin: 0; width: 30px; height: 12px; }
.toggle::before { content: ""; position: absolute; left: 0; top: 0; width: 12px; height: 12px; border: 2px solid #fff; border-radius: 50%; }
.toggle::after { content: ""; position: absolute; left: 12px; right: 0; top: 5px; height: 2px; background: #fff; }
.mark { position: absolute; z-index: 3; top: 0; bottom: 0; left: -5px; right: 3px; border: 2px solid #d00000; box-shadow: 1px 2px 3px rgba(0, 0, 0, .4); }
.pointer { position: absolute; z-index: 3; left: -166px; top: -28px; overflow: visible; }
.detail {
  display: flex;
  flex-direction: column;
  height: 173px;
  padding: 9px 23px 0 17px;
  background: #505050;
  color: #6c6c6c;
  font-size: 11px;
  line-height: 16px;
}
.pick { position: relative; width: 44px; height: 24px; margin: 5px 0 20px; }
.pick::after { content: ""; position: absolute; right: 10px; top: 10px; border: solid transparent; border-width: 5px 5px 0; border-top-color: #888; }
.pick select { appearance: none; width: 100%; height: 100%; border: 1px solid #6c6c6c; background: none; }
.spin { display: flex; align-items: center; height: 20px; margin: 4px 0 26px; padding-left: 10px; }
.spin input { width: 40px; border: 0; padding: 0; background: none; color: #6c6c6c; font: inherit; font-size: 12px; }
.revert { align-self: flex-end; color: #f2c811; white-space: nowrap; }
.vthumb { position: absolute; z-index: 2; right: 0; top: 6px; width: 6px; height: 191px; border-radius: 3px; background: #808080; }

/* Edge of the next pane */
.fields { flex: none; width: 6px; display: flex; flex-direction: column; background: #444; }
.fhead { height: 48px; background: #2a2827; }
.fsearch { height: 30px; margin: 4px 0 5px 4px; background: #1c1c1c; border: solid #000; border-width: 1px 0 1px 1px; }
.flist { height: 192px; margin: 40px 0 0 4px; border-left: 1px solid #5e5e5e; }
```
